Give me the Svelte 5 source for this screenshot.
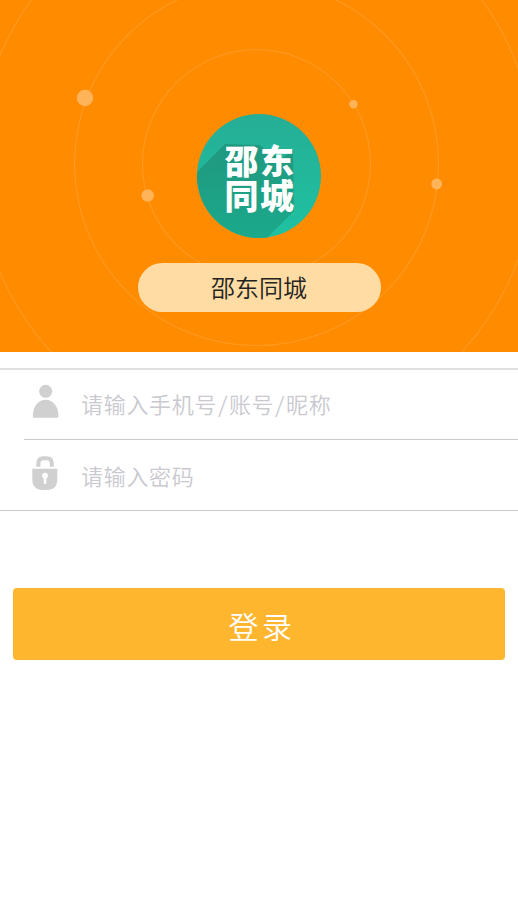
<script>
  let account = "";
  let password = "";

  const orbits = [114, 182, 278.5];
  const planets = [
    { x: 85, y: 98, r: 8.2 },
    { x: 147.7, y: 195.5, r: 6.2 },
    { x: 353.5, y: 104.3, r: 4.2 },
    { x: 436.7, y: 184, r: 5.4 },
  ];
</script>

<main class="login">
  <header class="hero">
    <svg class="hero__sky" viewBox="0 0 518 352" aria-hidden="true">
      {#each orbits as r}
        <circle class="orbit" cx="256.5" cy="163.7" {r} />
      {/each}
      {#each planets as p}
        <circle class="planet" cx={p.x} cy={p.y} r={p.r} />
      {/each}
    </svg>
    <svg class="hero__logo" viewBox="0 0 124 124">
      <defs>
        <linearGradient id="teal" x1="0" y1="0" x2="0" y2="1">
          <stop offset="0" stop-color="#25ae95" />
          <stop offset="1" stop-color="#1fc1a2" />
        </linearGradient>
        <linearGradient id="shade" x1="0" y1="0" x2="0" y2="1">
          <stop offset="0" stop-color="#20987f" />
          <stop offset="1" stop-color="#1ba98b" />
        </linearGradient>
        <clipPath id="disc"><circle cx="62" cy="62" r="62" /></clipPath>
      </defs>
      <circle cx="62" cy="62" r="62" fill="url(#teal)" />
      <path
        d="M28 30 L-2 60 V124 H70 L97 97 L96 36 L84 45 L62 31 Z"
        fill="url(#shade)"
        clip-path="url(#disc)"
      />
      <text class="logo-text" x="27.500" y="59.500">邵东</text>
      <text class="logo-text" x="27.500" y="95">同城</text>
    </svg>
    <h1 class="hero__name">邵东同城</h1>
  </header>

  <form class="form" on:submit|preventDefault>
    <div class="fields">
      <label class="field field--account">
        <svg class="field__icon" viewBox="0 0 28 34">
          <circle cx="13.700" cy="7.300" r="6.5" />
          <path
            d="M.8 32.200C.8 22.700 6 15.700 13.7 15.700s12.8 7 12.8 16.5q0 1.500-1.500 1.500h-22.700q-1.500 0-1.500-1.500z"
          />
        </svg>
        <input
          class="field__input"
          type="text"
          placeholder="请输入手机号/账号/昵称"
          bind:value={account}
        />
      </label>
      <label class="field field--last">
        <svg class="field__icon" viewBox="0 0 28 34">
          <path
            d="M4.300 10.700V7.500Q4.300.300 11.500.300h3Q21.800.300 21.800 7.500v3.200h-4V7.500q0-3.200-3.200-3.200h-3q-3.200 0-3.200 3.200v3.200z"
          />
          <path
            fill-rule="evenodd"
            d="M.3 12.700H25.300V23q0 11-10.500 11h-4q-10.500 0-10.500-11zM13 16.700a3 3 0 0 0-1.300 5.700V27q0 1 1.300 1t1.300-1v-4.600A3 3 0 0 0 13 16.700z"
          />
        </svg>
        <input
          class="field__input"
          type="password"
          placeholder="请输入密码"
          bind:value={password}
        />
      </label>
    </div>
    <button class="submit" type="submit">登录</button>
  </form>
</main>

<style>
  :global(body) {
    margin: 0;
    background: #fff;
  }
  .login {
    min-height: 920px;
    font-family: "Noto Sans CJK SC", sans-serif;
    font-weight: 350;
  }
  .hero {
    position: relative;
    box-sizing: border-box;
    height: 352px;
    padding-top: 114px;
    background: #ff8b00;
    display: flex;
    flex-direction: column;
    align-items: center;
    overflow: hidden;
  }
  .hero__sky {
    position: absolute;
    top: 0;
    left: 0;
    width: 518px;
    height: 352px;
  }
  .orbit {
    fill: none;
    stroke: #fff;
    stroke-opacity: 0.12;
    stroke-width: 1.2;
  }
  .planet {
    fill: #ffb45a;
  }
  .hero__logo {
    position: relative;
    width: 124px;
    height: 124px;
  }
  .logo-text {
    fill: #fff;
    font-size: 34px;
    font-weight: 900;
    letter-spacing: 1.500px;
  }
  .hero__name {
    position: relative;
    width: 243px;
    height: 49px;
    margin: 25px 0 0;
    border-radius: 25px;
    background: #ffdca3;
    color: #222;
    font-size: 24px;
    font-weight: 350;
    line-height: 48px;
    text-align: center;
  }
  .fields {
    margin-top: 16px;
    border-top: 2px solid #e0e0e0;
    border-bottom: 1px solid #c9c9ca;
  }
  .field {
    display: flex;
    align-items: center;
    height: 69px;
    margin-left: 24px;
    padding-left: 8px;
    border-bottom: 1px solid #c9c9ce;
  }
  .field--account {
    box-sizing: border-box;
    height: 70px;
    padding-bottom: 3px;
  }
  .field--last {
    height: 70px;
    border-bottom: none;
  }
  .field__icon {
    flex: none;
    width: 28px;
    height: 34px;
    margin-right: 21px;
    margin-bottom: 4px;
    fill: #d0d0d0;
  }
  .field__input {
    flex: 1;
    min-width: 0;
    height: 40px;
    padding: 0;
    border: none;
    outline: none;
    background: transparent;
    color: #333;
    font: inherit;
    font-size: 22px;
    font-feature-settings: "hwid";
    letter-spacing: 0.7px;
  }
  .field__input::placeholder {
    color: #c9c9cf;
    opacity: 1;
  }
  .submit {
    display: block;
    width: calc(100% - 26px);
    height: 72px;
    margin: 77px 13px 0;
    padding: 2px 0 0 6px;
    border: none;
    border-radius: 4px;
    background: #ffb62f;
    color: #fff;
    font: inherit;
    font-size: 30px;
    letter-spacing: 3.500px;
  }
</style>
